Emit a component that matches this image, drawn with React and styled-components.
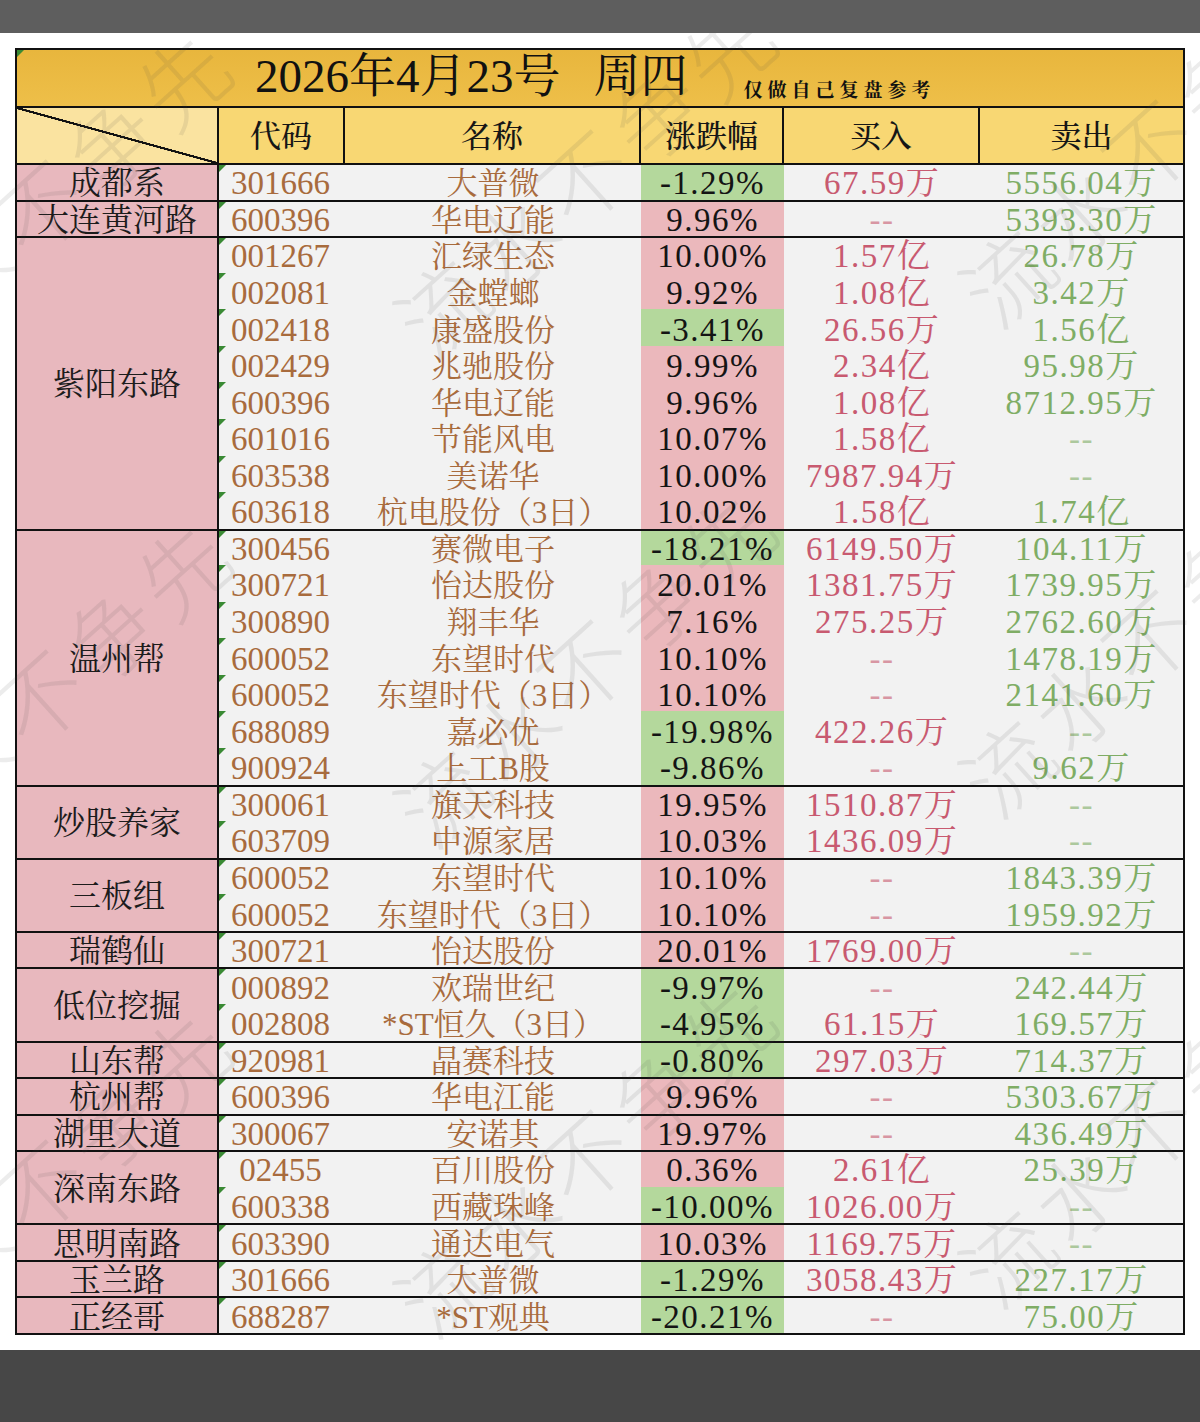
import React from 'react'
import styled, { createGlobalStyle } from 'styled-components'

const ROW_H = 36.5625

const groups = [
  { name: '成都系', rows: [['301666', '大普微', '-1.29%', '67.59万', '5556.04万']] },
  { name: '大连黄河路', rows: [['600396', '华电辽能', '9.96%', '--', '5393.30万']] },
  {
    name: '紫阳东路',
    rows: [
      ['001267', '汇绿生态', '10.00%', '1.57亿', '26.78万'],
      ['002081', '金螳螂', '9.92%', '1.08亿', '3.42万'],
      ['002418', '康盛股份', '-3.41%', '26.56万', '1.56亿'],
      ['002429', '兆驰股份', '9.99%', '2.34亿', '95.98万'],
      ['600396', '华电辽能', '9.96%', '1.08亿', '8712.95万'],
      ['601016', '节能风电', '10.07%', '1.58亿', '--'],
      ['603538', '美诺华', '10.00%', '7987.94万', '--'],
      ['603618', '杭电股份（3日）', '10.02%', '1.58亿', '1.74亿'],
    ],
  },
  {
    name: '温州帮',
    rows: [
      ['300456', '赛微电子', '-18.21%', '6149.50万', '104.11万'],
      ['300721', '怡达股份', '20.01%', '1381.75万', '1739.95万'],
      ['300890', '翔丰华', '7.16%', '275.25万', '2762.60万'],
      ['600052', '东望时代', '10.10%', '--', '1478.19万'],
      ['600052', '东望时代（3日）', '10.10%', '--', '2141.60万'],
      ['688089', '嘉必优', '-19.98%', '422.26万', '--'],
      ['900924', '上工B股', '-9.86%', '--', '9.62万'],
    ],
  },
  {
    name: '炒股养家',
    rows: [
      ['300061', '旗天科技', '19.95%', '1510.87万', '--'],
      ['603709', '中源家居', '10.03%', '1436.09万', '--'],
    ],
  },
  {
    name: '三板组',
    rows: [
      ['600052', '东望时代', '10.10%', '--', '1843.39万'],
      ['600052', '东望时代（3日）', '10.10%', '--', '1959.92万'],
    ],
  },
  { name: '瑞鹤仙', rows: [['300721', '怡达股份', '20.01%', '1769.00万', '--']] },
  {
    name: '低位挖掘',
    rows: [
      ['000892', '欢瑞世纪', '-9.97%', '--', '242.44万'],
      ['002808', '*ST恒久（3日）', '-4.95%', '61.15万', '169.57万'],
    ],
  },
  { name: '山东帮', rows: [['920981', '晶赛科技', '-0.80%', '297.03万', '714.37万']] },
  { name: '杭州帮', rows: [['600396', '华电江能', '9.96%', '--', '5303.67万']] },
  { name: '湖里大道', rows: [['300067', '安诺其', '19.97%', '--', '436.49万']] },
  {
    name: '深南东路',
    rows: [
      ['\u00a002455', '百川股份', '0.36%', '2.61亿', '25.39万'],
      ['600338', '西藏珠峰', '-10.00%', '1026.00万', '--'],
    ],
  },
  { name: '思明南路', rows: [['603390', '通达电气', '10.03%', '1169.75万', '--']] },
  { name: '玉兰路', rows: [['301666', '大普微', '-1.29%', '3058.43万', '227.17万']] },
  { name: '正经哥', rows: [['688287', '*ST观典', '-20.21%', '--', '75.00万']] },
]

// centre of each watermark (the middle char) in canvas coordinates
const marks = [
  [40, 170], [585, 140], [1150, 110],
  [40, 660], [585, 630], [1150, 600],
  [40, 1150], [585, 1120], [1150, 1090],
]

const App = () => {
  return (
    <Screen>
      <GlobalStyle />
      <TopBar />
      <Canvas>
        <Sheet>
          <TitleRow>
            <DateText>2026年4月23号</DateText>
            <DateText $gap>周四</DateText>
            <Note>仅做自己复盘参考</Note>
          </TitleRow>
          <HeadRow>
            <HeadCell $diag />
            <HeadCell>代码</HeadCell>
            <HeadCell>名称</HeadCell>
            <HeadCell>涨跌幅</HeadCell>
            <HeadCell>买入</HeadCell>
            <HeadCell $last>卖出</HeadCell>
          </HeadRow>
          {groups.map((g, gi) => (
            <Group key={gi}>
              <Label>{g.name}</Label>
              <Rows>
                {g.rows.map((r, ri) => (
                  <Row key={ri}>
                    <Code>{r[0]}</Code>
                    <Name>{r[1]}</Name>
                    <Change $down={r[2].startsWith('-')}>{r[2]}</Change>
                    <Amount $tone="buy" $dash={r[3] === '--'}>{r[3]}</Amount>
                    <Amount $tone="sell" $dash={r[4] === '--'}>{r[4]}</Amount>
                  </Row>
                ))}
              </Rows>
            </Group>
          ))}
        </Sheet>
        <Watermark>
          {marks.map(([x, y], i) => (
            <Mark key={i} style={{ left: x, top: y }}>流水不争先</Mark>
          ))}
        </Watermark>
      </Canvas>
      <BottomBar />
    </Screen>
  )
}

const GlobalStyle = createGlobalStyle`
  html, body {
    margin: 0;
    padding: 0;
    background: #fff;
  }
  body {
    font-family: "Liberation Serif", "Noto Serif CJK SC", "Noto Sans CJK SC", serif;
  }
`

const Screen = styled.div`
  width: 1200px;
  height: 1422px;
  display: flex;
  flex-direction: column;
  overflow: hidden;
`

const TopBar = styled.div`
  height: 33px;
  flex-shrink: 0;
  background: #5e5e5e;
`

const BottomBar = styled.div`
  height: 72px;
  flex-shrink: 0;
  background: #474747;
`

const Canvas = styled.div`
  flex: 1;
  position: relative;
  overflow: hidden;
  background: #fff;
  padding: 15px 15px 0;
`

const Sheet = styled.div`
  width: 1170px;
  box-sizing: border-box;
  border: 2px solid #111;
  background: #f2f2f2;
`

const TitleRow = styled.div`
  position: relative;
  height: 56px;
  box-sizing: border-box;
  display: flex;
  align-items: flex-end;
  padding: 0 0 6px 238px;
  background: linear-gradient(#e8b63d, #eebf49);
  color: #111;

  &::before {
    content: '';
    position: absolute;
    left: 0;
    top: 0;
    border-top: 7px solid #3a8a34;
    border-right: 7px solid transparent;
  }
`

const DateText = styled.span`
  font-size: 47px;
  line-height: 1;
  margin-left: ${(p) => (p.$gap ? '33px' : '0')};
`

const Note = styled.span`
  font-size: 19px;
  line-height: 1;
  font-weight: 700;
  letter-spacing: 5px;
  margin-left: 56px;
`

const HeadRow = styled.div`
  height: 57px;
  box-sizing: border-box;
  border-top: 2px solid #111;
  display: grid;
  grid-template-columns: 202px 126px 296px 143px 196px 1fr;
  background: #f8d773;
`

const HeadCell = styled.div`
  display: flex;
  align-items: center;
  justify-content: center;
  padding-top: 2px;
  box-sizing: border-box;
  border-right: ${(p) => (p.$last ? 'none' : '2px solid #111')};
  font-size: 31px;
  line-height: 1;
  font-weight: 500;
  color: #161616;
  background: ${(p) =>
    p.$diag
      ? 'linear-gradient(to top right, #fae3a0 calc(50% - 1.2px), #111 calc(50% - 1px), #111 calc(50% + 1px), #fae3a0 calc(50% + 1.2px))'
      : 'transparent'};
`

const Group = styled.div`
  display: flex;
  border-top: 2px solid #111;
`

const Label = styled.div`
  width: 202px;
  flex-shrink: 0;
  box-sizing: border-box;
  border-right: 2px solid #111;
  background: #e8b8be;
  display: flex;
  align-items: center;
  justify-content: center;
  padding-top: 2px;
  font-size: 32px;
  line-height: 1;
  color: #1c1c1c;
  white-space: nowrap;
`

const Rows = styled.div`
  flex: 1;
  display: flex;
  flex-direction: column;
`

const Row = styled.div`
  height: ${ROW_H}px;
  display: grid;
  grid-template-columns: 126px 296px 143px 196px 1fr;

  &:first-child {
    height: ${ROW_H - 2}px;
  }
  &:first-child > div {
    padding-top: 3px;
  }
`

const Cell = styled.div`
  display: flex;
  align-items: center;
  justify-content: center;
  padding-top: 5px;
  box-sizing: border-box;
  white-space: nowrap;
  font-size: 33px;
  line-height: 1;
  min-height: 0;
`

const Code = styled(Cell)`
  position: relative;
  justify-content: flex-start;
  padding-left: 12px;
  color: #a86b3d;

  &::before {
    content: '';
    position: absolute;
    left: 0;
    top: 0;
    border-top: 7px solid #3a8a34;
    border-right: 7px solid transparent;
  }
`

const Name = styled(Cell)`
  font-size: 31px;
  color: #a86b3d;
`

const Change = styled(Cell)`
  color: #141414;
  letter-spacing: 1.5px;
  background: ${(p) => (p.$down ? '#b4d89c' : '#ebb8bc')};
`

const Amount = styled(Cell)`
  color: ${(p) => (p.$tone === 'buy' ? '#c85a70' : '#7fad65')};
  letter-spacing: 1.5px;
  opacity: ${(p) => (p.$dash ? 0.6 : 1)};
`

const Watermark = styled.div`
  position: absolute;
  inset: 0;
  pointer-events: none;
  overflow: hidden;
`

const Mark = styled.span`
  position: absolute;
  transform: translate(-50%, -50%) rotate(-42deg);
  font-family: "Noto Sans CJK SC", sans-serif;
  font-weight: 300;
  font-size: 88px;
  letter-spacing: 8px;
  white-space: nowrap;
  color: rgba(70, 70, 70, 0.1);
`

export default App
